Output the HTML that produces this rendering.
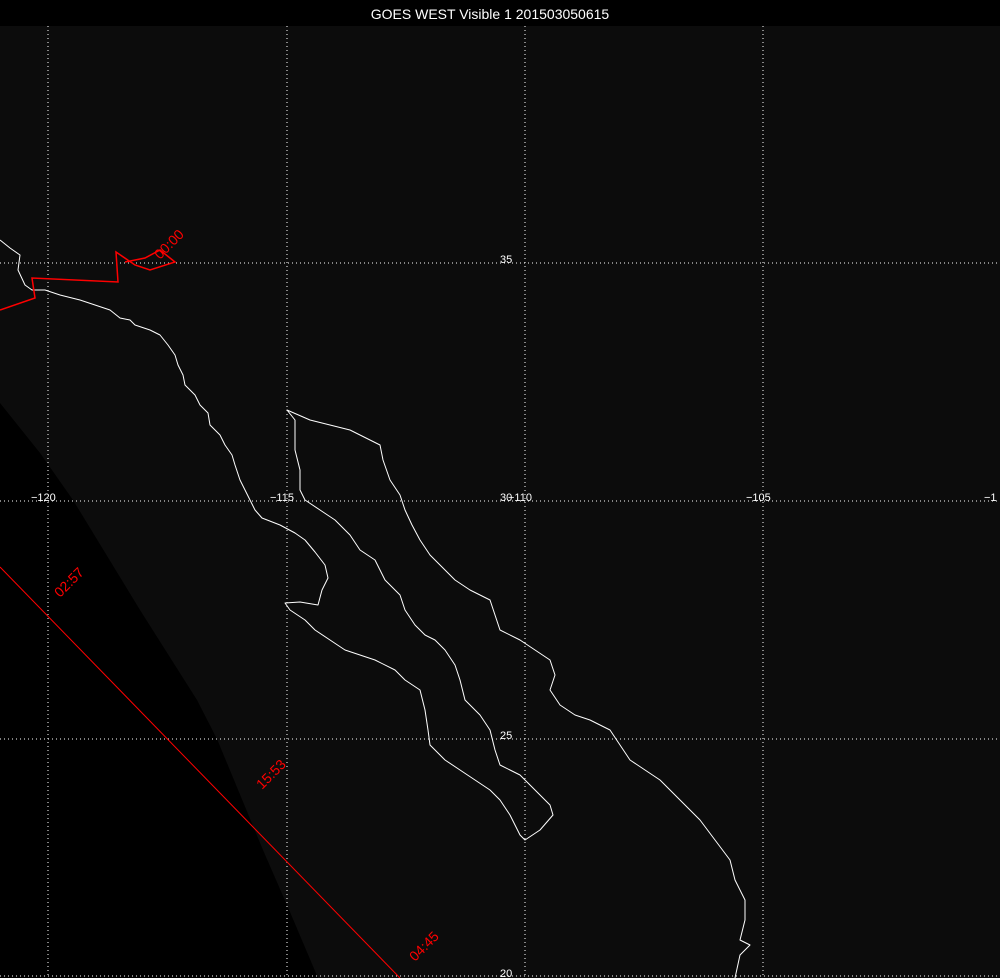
<!DOCTYPE html>
<html><head><meta charset="utf-8"><style>
html,body{margin:0;padding:0;background:#000;}
svg{display:block;}
text{font-family:"Liberation Sans",sans-serif;}
</style></head><body>
<svg width="1000" height="978" viewBox="0 0 1000 978" xmlns="http://www.w3.org/2000/svg">
<rect x="0" y="0" width="1000" height="978" fill="#000"/>
<rect x="0" y="26" width="1000" height="952" fill="#0c0c0c"/>
<path d="M0,403 L40,453 L73,500 L140,610 L197,700 L217,739 L263,850 L290,912 L318,978 L0,978 Z" fill="#000"/>
<text x="490" y="19" fill="#fff" font-size="14" text-anchor="middle">GOES WEST Visible 1 201503050615</text>
<g stroke="#fff" stroke-width="1" stroke-dasharray="1,3" fill="none">
<line x1="48" y1="26" x2="48" y2="978"/>
<line x1="287" y1="26" x2="287" y2="978"/>
<line x1="525" y1="26" x2="525" y2="978"/>
<line x1="763" y1="26" x2="763" y2="978"/>
<line x1="0" y1="263" x2="1000" y2="263"/>
<line x1="0" y1="501" x2="1000" y2="501"/>
<line x1="0" y1="739" x2="1000" y2="739"/>
<line x1="0" y1="976" x2="1000" y2="976"/>
</g>
<g fill="#fff" font-size="11">
<text x="500" y="263">35</text>
<text x="500" y="501">30</text>
<text x="500" y="739">25</text>
<text x="500" y="977">20</text>
<text x="31" y="501">−120</text>
<text x="270" y="501">−115</text>
<text x="508" y="501">−110</text>
<text x="746" y="501">−105</text>
<text x="984" y="501">−1</text>
</g>
<g stroke="#fff" stroke-width="1" fill="none" stroke-linejoin="round">
<polyline points="0,240 10,248 20,255 18,270 25,285 32,290 45,290 60,295 80,300 95,305 110,310 120,318 130,320 135,325 150,330 160,335 168,345 175,355 178,365 183,375 185,385 195,395 200,405 208,413 210,425 220,435 225,445 232,455 235,465 240,480 245,490 250,500 255,510 262,518 280,525 295,533 305,540 315,552 325,565 328,578 322,590 318,605 300,602 285,603 290,610 305,620 315,630 330,640 345,650 360,655 375,660 395,670 405,680 420,690 425,710 428,730 430,745 445,760 460,770 475,780 490,790 500,800 510,815 520,835 525,840 540,830 553,815 550,805 540,795 530,785 520,775 510,770 500,765 495,750 490,730 480,715 465,700 460,680 455,665 445,650 435,640 425,635 415,625 405,610 400,595 385,580 375,560 360,550 350,535 335,520 320,510 305,500 300,490 300,470 295,450 295,420 287,410 310,420 330,425 350,430 370,440 380,445 383,460 390,480 400,495 405,510 412,525 420,540 430,555 440,565 455,580 470,590 490,600 495,615 500,630 520,640 535,650 550,660 555,675 550,690 560,705 575,715 590,720 610,730 620,745 630,760 645,770 660,780 680,800 700,820 715,840 730,860 735,880 745,900 745,920 740,940 750,945 740,955 735,978"/>
</g>
<g stroke="#f00" fill="none">
<polyline stroke-width="1.5" points="0,310 35,298 32,278 118,282 116,252 135,265 150,270 175,262 160,250 145,258 125,262"/>
<line stroke-width="1" x1="0" y1="567" x2="400" y2="978"/>
</g>
<g fill="#f00" font-size="14">
<text transform="translate(160,260) rotate(-45)">00:00</text>
<text transform="translate(60,598) rotate(-45)">02:57</text>
<text transform="translate(262,790) rotate(-45)">15:53</text>
<text transform="translate(415,962) rotate(-45)">04:45</text>
</g>
</svg>
</body></html>
